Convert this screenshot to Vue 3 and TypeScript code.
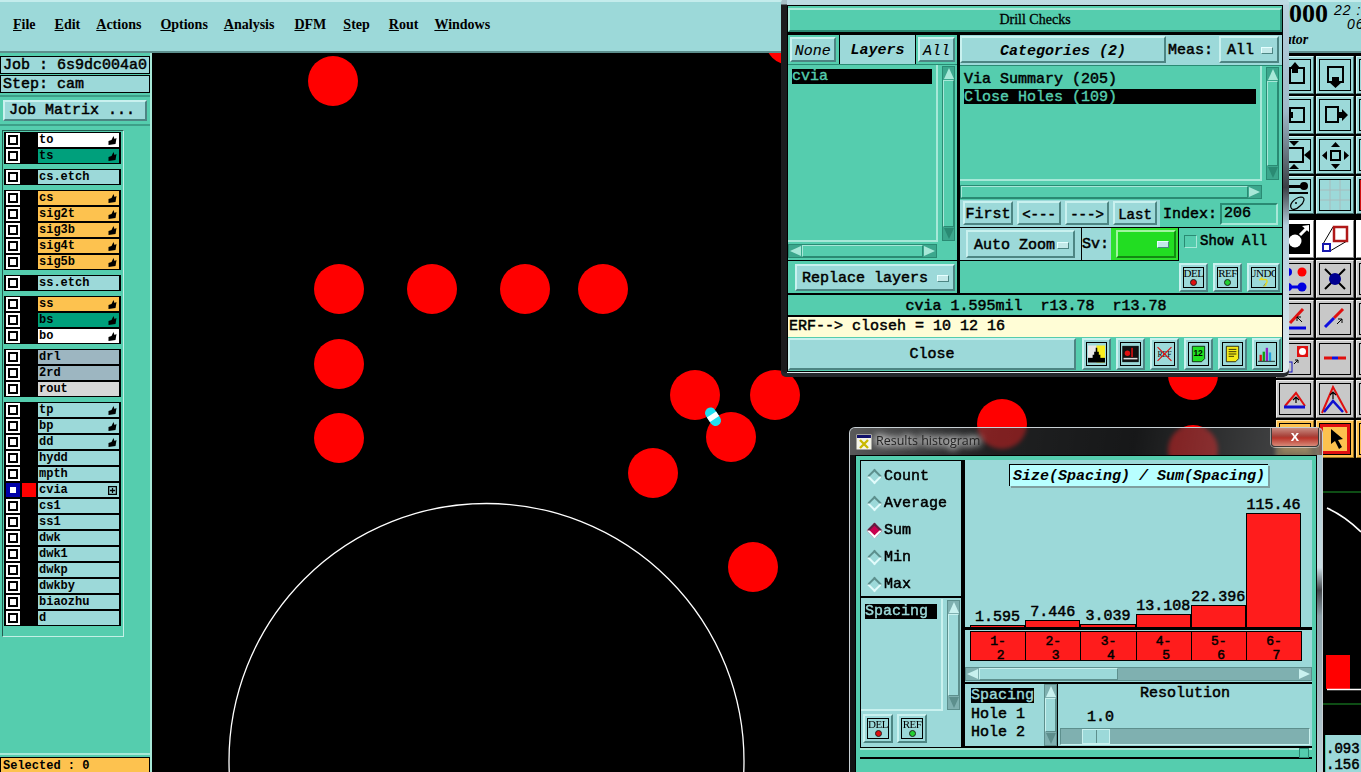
<script setup lang="ts">
type Shape = [string, Record<string, string | number>]

const r = (x: number, y: number, w: number, h: number, fill = 'none', stroke = 'none', sw = 2): Shape =>
  ['rect', { x, y, width: w, height: h, fill, stroke, 'stroke-width': sw }]
const c = (cx: number, cy: number, rad: number, fill: string, stroke = 'none', sw = 1): Shape =>
  ['circle', { cx, cy, r: rad, fill, stroke, 'stroke-width': sw }]
const l = (d: string, stroke = '#000', sw = 2): Shape => ['path', { d, stroke, 'stroke-width': sw, fill: 'none' }]
const f = (d: string, fill = '#000'): Shape => ['path', { d, fill }]

const menus = ['File', 'Edit', 'Actions', 'Options', 'Analysis', 'DFM', 'Step', 'Rout', 'Windows']

interface Layer { name: string; color: string; hand?: boolean; active?: boolean }
const groups: Layer[][] = [
  [{ name: 'to', color: 'white', hand: true }, { name: 'ts', color: 'green', hand: true }],
  [{ name: 'cs.etch', color: 'blue' }],
  [
    { name: 'cs', color: 'orange', hand: true },
    { name: 'sig2t', color: 'orange', hand: true },
    { name: 'sig3b', color: 'orange', hand: true },
    { name: 'sig4t', color: 'orange', hand: true },
    { name: 'sig5b', color: 'orange', hand: true },
  ],
  [{ name: 'ss.etch', color: 'blue' }],
  [
    { name: 'ss', color: 'orange', hand: true },
    { name: 'bs', color: 'green', hand: true },
    { name: 'bo', color: 'white', hand: true },
  ],
  [{ name: 'drl', color: 'steel' }, { name: '2rd', color: 'steel' }, { name: 'rout', color: 'grey' }],
  [
    { name: 'tp', color: 'blue', hand: true },
    { name: 'bp', color: 'blue', hand: true },
    { name: 'dd', color: 'blue', hand: true },
    { name: 'hydd', color: 'blue' },
    { name: 'mpth', color: 'blue' },
    { name: 'cvia', color: 'blue', active: true },
    { name: 'cs1', color: 'blue' },
    { name: 'ss1', color: 'blue' },
    { name: 'dwk', color: 'blue' },
    { name: 'dwk1', color: 'blue' },
    { name: 'dwkp', color: 'blue' },
    { name: 'dwkby', color: 'blue' },
    { name: 'biaozhu', color: 'blue' },
    { name: 'd', color: 'blue' },
  ],
]

// pads on the board, in page coordinates
const pads = [
  [333, 81], [790, 40], [339, 289], [432, 289], [525, 289], [603, 289], [339, 364], [339, 438],
  [695, 395], [775, 395], [731, 437], [653, 473], [753, 567], [1193, 375], [1002, 424], [1193, 450],
]

interface Tool { tone: string; shapes: Shape[] }
const toolsTop: Tool[] = [
  { tone: 'teal', shapes: [r(10, 8, 14, 15, 'none', '#000'), f('M15 2 20 8H18V13H12V8H10Z')] },
  { tone: 'teal', shapes: [r(8, 7, 15, 15, 'none', '#000'), f('M12 17H19V22H22L15.5 28 9 22H12Z')] },
  { tone: 'teal', shapes: [r(6, 8, 16, 14, 'none', '#000')] },
  { tone: 'teal', shapes: [r(10, 8, 14, 14, 'none', '#000'), f('M5 15 9 10V12H13V18H9V20Z')] },
  { tone: 'teal', shapes: [r(6, 7, 12, 15, 'none', '#000'), f('M28 15 22 9V12H17V18H22V21Z')] },
  { tone: 'teal', shapes: [r(8, 8, 14, 14, 'none', '#000')] },
  { tone: 'teal', shapes: [r(6, 8, 17, 14, 'none', '#000'), f('M9 1H19L14 6Z'), f('M9 29H19L14 24Z'), f('M24 15 30 10V20Z')] },
  { tone: 'teal', shapes: [r(11, 11, 9, 9, 'none', '#000'), f('M15.5 2 20 7H11Z'), f('M15.5 29 20 24H11Z'), f('M2 15.5 7 11V20Z'), f('M29 15.5 24 11V20Z')] },
  { tone: 'teal', shapes: [r(6, 8, 18, 14, 'none', '#000')] },
  { tone: 'teal', shapes: [r(0, 5, 24, 3, '#000'), c(24, 6, 4, '#000'), r(0, 12, 28, 2, '#000'), l('M12 29C8 25 14 18 21 17 26 17 24 23 20 26 17 29 14 30 12 29Z', '#000', 1.2), c(16, 23, 1, '#000')] },
  { tone: 'teal', shapes: [l('M10 0V30M20 0V30M0 10H30M0 20H30', '#a8bcbc', 1)] },
  { tone: 'teal', shapes: [r(2, 2, 26, 26, 'none', '#d01010', 4)] },
]
const arrowTip = 'M17 20 22 15M22 15V19M22 15H18'
const toolsBottom: Tool[] = [
  { tone: 'white', shapes: [r(0, 0, 30, 30, '#000'), c(15, 17, 6.5, '#fff'), l('M20 11 27 4', '#fff', 3), f('M29 1V8L22 2Z', '#fff')] },
  { tone: 'white', shapes: [l('M3 20 13 3M10 27 27 17', '#000', 1), r(14, 3, 13, 14, '#fff', '#b01818', 2.5), r(3, 20, 7, 7, '#fff', '#1818b0', 2)] },
  { tone: 'white', shapes: [] },
  { tone: 'grey', shapes: [c(22, 8, 4.5, '#f00'), c(8, 8, 4, '#0000e0'), c(22, 23, 4.5, '#0000e0'), c(8, 23, 4, '#0000e0'), l('M8 23H22', '#0000e0', 3)] },
  { tone: 'grey', shapes: [l('M5 5 25 25M25 5 5 25', '#000', 2), c(15, 15, 6, '#000090')] },
  { tone: 'grey', shapes: [] },
  { tone: 'grey', shapes: [l('M10 19 23 5', '#e01010', 3), l('M7 24H26', '#0000e0', 3), l('M17 13 22 18M17 13V17M17 13H21', '#000', 1)] },
  { tone: 'grey', shapes: [l('M14 14 23 5', '#e01010', 3), l('M5 23 14 14', '#1010e0', 3), l(arrowTip, '#000', 1)] },
  { tone: 'grey', shapes: [] },
  { tone: 'grey', shapes: [r(17, 2, 11, 11, '#e01010'), c(22.5, 7.5, 3.5, '#fff'), r(7, 18, 5, 10, 'none', '#1010c0', 1), l('M14 20 18 16M18 16V19M18 16H15', '#000', 1)] },
  { tone: 'grey', shapes: [l('M4 14H12M18 14H26', '#e01010', 3), l('M12 14H18', '#1010e0', 3)] },
  { tone: 'grey', shapes: [] },
  { tone: 'grey', shapes: [l('M5 22 16 9 25 22', '#e01010', 2), l('M4 23H25', '#1010d0', 3), l('M16 19V13M13 16 16 13 19 16', '#000', 1.2)] },
  { tone: 'grey', shapes: [l('M2 29 13 3 27 29', '#e01010', 2), l('M4 28 13 17 23 28', '#1010d0', 2.5), l('M13 15V8M10 11 13 8 16 11', '#000', 1.2)] },
  { tone: 'grey', shapes: [] },
  { tone: 'orange', shapes: [] },
  { tone: 'orange', shapes: [r(1.5, 1.5, 27, 27, 'none', '#e01010', 3), f('M11 5 11 20 15 17 19 25 22 23 18 16 23 15Z')] },
  { tone: 'orange', shapes: [] },
]

const footIcons: Shape[][] = [
  [r(0, 0, 11, 22, '#e8e8e8'), r(11, 0, 11, 22, '#f8ee20'), r(0, 16, 22, 6, '#000'), f('M6 17V12H8V8H10V3H12V8H14V12H16V17Z'), r(7, 4, 1, 2), r(15, 4, 1, 2)],
  [r(1, 1, 20, 20, '#111', '#000', 1), r(2, 16, 18, 2, '#ddd'), c(7, 10, 3.5, '#e01010'), r(12, 3, 2, 12, '#e01010')],
  [],
  [f('M3 1H19V17L15 21H3Z', '#22e022'), l('M3 1H19V17L15 21H3Z', '#000', 1)],
  [f('M3 1H19V17L15 21H3Z', '#f4ea18'), l('M3 1H19V17L15 21H3Z', '#000', 1), l('M6 5H16M6 8H16M6 11H16M6 14H13', '#000', 1)],
  [r(2, 12, 3, 8, '#e01010'), r(6, 8, 3, 12, '#10a010'), r(10, 3, 3, 17, '#9020c0'), r(14, 9, 3, 11, '#20a0e0'), l('M0 20.5H22', '#000', 1)],
]
const crossOut = l('M2 2 20 20M20 2 2 20', '#e01010', 1.5)

const statusText = 'cvia 1.595mil  r13.78  r13.78'

interface Bar { value: string; range: string[] }
const bars: Bar[] = [
  { value: '1.595', range: ['1-', '2'] },
  { value: '7.446', range: ['2-', '3'] },
  { value: '3.039', range: ['3-', '4'] },
  { value: '13.108', range: ['4-', '5'] },
  { value: '22.396', range: ['5-', '6'] },
  { value: '115.46', range: ['6-', '7'] },
]
const barHeight = (v: string) => Math.max(1, Math.round(parseFloat(v) * 0.99)) + 'px'

const modes = ['Count', 'Average', 'Sum', 'Min', 'Max']
</script>

<template>
  <div class="desk">
    <!-- top bar -->
    <header class="menubar">
      <nav class="menus">
        <span v-for="m in menus" :key="m" class="menu"><u>{{ m[0] }}</u>{{ m.slice(1) }}</span>
      </nav>
      <div class="clock">
        <div class="clock-top">
          <span class="big">2000</span>
          <span class="date">22 :<br /><em>06</em></span>
        </div>
        <span class="oper">Operator</span>
      </div>
    </header>

    <!-- layer column -->
    <aside class="side">
      <div class="side-label">Job : 6s9dc004a0</div>
      <div class="side-label">Step: cam</div>
      <div class="matrix-wrap"><button class="btn matrix">Job Matrix ...</button></div>
      <div class="layers">
        <div v-for="(g, i) in groups" :key="i" class="group">
          <div v-for="lay in g" :key="lay.name" class="layer">
            <span class="chk" :class="{ on: lay.active }"><i></i></span>
            <span class="swatch" :class="{ red: lay.active }"></span>
            <span class="lname" :class="lay.color">
              {{ lay.name }}
              <svg v-if="lay.hand" class="hand" viewBox="0 0 8 9"><path d="M0 9V5L3 4 5 0 6 3 8 2 7 8Z" /></svg>
              <svg v-if="lay.active" class="hand" viewBox="0 0 7 7"><path d="M.5.5H6.5V6.5H.5ZM3.5 1.5V5.5M1.5 3.5H5.5" fill="none" stroke="#000" /></svg>
            </span>
          </div>
        </div>
      </div>
      <div class="side-fill"></div>
      <div class="selected">Selected : 0</div>
    </aside>

    <!-- board -->
    <main class="board">
      <svg class="board-svg" viewBox="152 52 1124 720">
        <circle v-for="(p, i) in pads" :key="i" :cx="p[0]" :cy="p[1]" r="25" fill="#f00" />
        <circle cx="486.5" cy="761" r="257.5" fill="none" stroke="#fff" stroke-width="1.3" />
        <path d="M710.5 413 715.5 420.5" stroke="#21dff0" stroke-width="11" stroke-linecap="round" />
        <path d="M711.5 414.5 714.5 419" stroke="#fff" stroke-width="11" />
      </svg>
    </main>

    <!-- right column -->
    <section class="rightcol">
      <div class="tools">
        <div v-for="(t, i) in toolsTop" :key="i" class="tool" :class="t.tone">
          <svg class="tool-ic" viewBox="0 0 30 30">
            <component :is="s[0]" v-for="(s, j) in t.shapes" :key="j" v-bind="s[1]" />
          </svg>
        </div>
      </div>
      <div class="tools lower">
        <div v-for="(t, i) in toolsBottom" :key="i" class="tool" :class="t.tone">
          <svg class="tool-ic" viewBox="0 0 30 30">
            <component :is="s[0]" v-for="(s, j) in t.shapes" :key="j" v-bind="s[1]" />
          </svg>
        </div>
      </div>
      <svg class="board-right" viewBox="1276 458 85 277">
        <path d="M1276 492H1361M1276 704H1361" stroke="#1d9a2a" />
        <rect x="1326" y="655" width="24" height="34" fill="#f00" />
        <path d="M1327 508C1340 514 1352 523 1361 532M1327 689.5H1361" stroke="#fff" stroke-width="1.6" fill="none" />
      </svg>
      <div class="coords">.093<br />.156</div>
    </section>

    <!-- Drill Checks window -->
    <div class="win drill">
      <div class="drill-in">
        <div class="drill-title">Drill Checks</div>
        <div class="drill-body">
          <div class="d-left">
            <div class="d-head">
              <button class="btn small it">None</button>
              <div class="d-layers">Layers</div>
              <button class="btn small it">All</button>
            </div>
            <div class="d-listrow">
              <div class="list"><div class="sel">cvia</div></div>
              <div class="vbar"><span class="ar up"></span><span class="thumb"></span><span class="ar dn"></span></div>
            </div>
            <div class="hbar left-h"><span class="ar lf"></span><span class="thumb"></span><span class="ar rt"></span></div>
            <div class="d-replace">
              <button class="btn opt replace">Replace layers<span class="dash"></span></button>
            </div>
          </div>
          <div class="d-right">
            <div class="d-cats">
              <button class="btn cats it">Categories (2)</button>
              <span class="meas">Meas:</span>
              <button class="btn opt measbtn">All<span class="dash"></span></button>
            </div>
            <div class="d-listrow catrow">
              <div class="list cats-list">
                <div class="item">Via Summary (205)</div>
                <div class="sel">Close Holes (109)</div>
              </div>
              <div class="vbar"><span class="ar up"></span><span class="thumb"></span><span class="ar dn"></span></div>
            </div>
            <div class="hbar cat-h"><span class="thumb"></span><span class="ar rt"></span></div>
            <div class="d-nav">
              <div class="nav-btns">
                <button class="btn nav">First</button>
                <button class="btn nav arrow">&lt;---</button>
                <button class="btn nav arrow">---&gt;</button>
                <button class="btn nav arrow">Last</button>
              </div>
              <span class="idx-label">Index:</span>
              <span class="idx">206</span>
            </div>
            <div class="d-zoom">
              <div class="zoom-cell"><button class="btn opt zoom">Auto Zoom<span class="dash"></span></button></div>
              <span class="sv">Sv:</span>
              <div class="sv-green"><button class="greenbtn"><span class="dash"></span></button></div>
              <span class="showbox"></span>
              <span class="showall">Show All</span>
            </div>
            <div class="d-acts">
              <div class="mini"><div class="mini-in"><span>DEL</span><b class="dot red"></b></div></div>
              <div class="mini"><div class="mini-in"><span>REF</span><b class="dot green"></b></div></div>
              <div class="mini wide"><div class="mini-in"><span>UNDO</span><svg class="undo" viewBox="0 0 12 12"><path d="M1 4 4 1V3H8C11 3 11 8 8 8 10 9 9 11 6 11" fill="none" stroke="#e8d820" stroke-width="1.6" /><path d="M8 8 6 11" stroke="#000" stroke-width=".4" /></svg></div></div>
            </div>
          </div>
        </div>
        <div class="status">{{ statusText }}</div>
        <div class="erf">ERF--&gt; closeh = 10 12 16</div>
        <div class="foot">
          <button class="btn closebtn">Close</button>
          <div v-for="(ic, i) in footIcons" :key="i" class="foot-ic">
            <div class="foot-frame">
              <svg viewBox="0 0 22 22">
                <component :is="s[0]" v-for="(s, j) in ic" :key="j" v-bind="s[1]" />
                <text v-if="i === 2" x="11" y="15" text-anchor="middle" class="reftxt">REF</text>
                <component :is="crossOut[0]" v-if="i === 2" v-bind="crossOut[1]" />
                <text v-if="i === 3" x="10.5" y="14" text-anchor="middle" class="nmtxt">12</text>
              </svg>
            </div>
          </div>
        </div>
      </div>
    </div>

    <!-- Results histogram window -->
    <div class="win histo">
      <div class="hist-title">
        <svg class="hist-ic" viewBox="0 0 16 16">
          <rect width="16" height="16" fill="#f4f4e8" stroke="#555" />
          <rect x="1" y="1" width="14" height="3" fill="#10106a" />
          <path d="M4 6 12 14M12 6 4 14" stroke="#c8b800" stroke-width="2.4" />
        </svg>
        <span class="hist-name">Results histogram</span>
        <span class="x-btn">x</span>
      </div>
      <div class="hist-in">
        <div class="hist-main">
          <div class="h-left">
            <div class="modes">
              <div v-for="m in modes" :key="m" class="mode">
                <span class="diamond" :class="{ on: m === 'Sum' }"></span>{{ m }}
              </div>
            </div>
            <div class="h-listrow">
              <div class="list light"><div class="sel short">Spacing</div></div>
              <div class="vbar light"><span class="ar up"></span><span class="thumb"></span><span class="ar dn"></span></div>
            </div>
            <div class="h-acts">
              <div class="mini light"><div class="mini-in"><span>DEL</span><b class="dot red"></b></div></div>
              <div class="mini light"><div class="mini-in"><span>REF</span><b class="dot green"></b></div></div>
            </div>
          </div>
          <div class="h-right">
            <div class="chart">
              <div class="chart-title">Size(Spacing) / Sum(Spacing)</div>
              <div class="bars">
                <div v-for="b in bars" :key="b.range[0]" class="barcol">
                  <span class="barval">{{ b.value }}</span>
                  <div class="bar" :style="{ height: barHeight(b.value) }"></div>
                </div>
              </div>
            </div>
            <div class="cells">
              <div v-for="b in bars" :key="b.range[0]" class="cell">
                <span>{{ b.range[0] }}</span><span class="cell2">{{ b.range[1] }}</span>
              </div>
            </div>
            <div class="hbar light hist-h"><span class="ar lf"></span><span class="thumb"></span><span class="ar rt"></span></div>
            <div class="h-bottom">
              <div class="attr">
                <div class="sel fit">Spacing</div>
                <div class="item">Hole 1</div>
                <div class="item">Hole 2</div>
              </div>
              <div class="vbar light attr-bar"><span class="ar up"></span><span class="thumb"></span><span class="ar dn"></span></div>
              <div class="reso">
                <div class="reso-t">Resolution</div>
                <div class="reso-v">1.0</div>
                <div class="slider"><span class="knob"></span></div>
              </div>
            </div>
          </div>
        </div>
        <div class="sash"><span class="sash-k"></span></div>
        <div class="hist-lower"></div>
      </div>
    </div>
  </div>
</template>

<style scoped>
.desk {
  position: relative;
  width: 1361px;
  height: 772px;
  overflow: hidden;
  background: #000;
  display: grid;
  grid-template-columns: 152px 1124px 85px;
  grid-template-rows: 53px 719px;
  font: 15px "Liberation Mono", monospace;
  -webkit-text-stroke: .5px #000;
  color: #000;
}
button {
  font: inherit;
  color: inherit;
  padding: 2px 0 0;
  box-sizing: border-box;
}

.btn {
  background: #9cd9d9;
  border: 2px solid;
  border-color: #c9f1ef #4d8583 #4d8583 #c9f1ef;
}
.it { font-style: italic; font-weight: bold; -webkit-text-stroke: 0; }

.menubar {
  grid-column: 1 / 4;
  display: flex;
  justify-content: space-between;
  background: #9cd9d9;
  border-top: 2px solid #c4ecec;
  border-bottom: 2px solid #5d8f8d;
  box-sizing: border-box;
  overflow: hidden;
  -webkit-text-stroke: 0;
}
.menus {
  display: flex;
  padding: 15px 0 0 13px;
  font: bold 14px "Liberation Serif", serif;
}
.menu { margin-right: 17px; }
.menu:nth-child(1) { margin-right: 19px; }
.menu:nth-child(2) { margin-right: 16px; }
.menu:nth-child(3) { margin-right: 19px; }
.menu:nth-child(4) { margin-right: 16px; }
.menu:nth-child(5) { margin-right: 20px; }
.menu:nth-child(7) { margin-right: 19px; }
.menu:nth-child(8) { margin-right: 16px; }
.clock {
  width: 72px;
  flex: none;
  font-family: "Liberation Serif", serif;
  white-space: nowrap;
  overflow: hidden;
}
.clock-top { display: flex; margin-left: -13px; height: 30px; }
.big { font-size: 26px; font-weight: bold; line-height: 24px; }
.date {
  font: italic 14px/14px "Liberation Sans", sans-serif;
  margin: 1px 0 0 6px;
  letter-spacing: 1px;
}
.date em { margin-left: 13px; }
.oper {
  font: italic bold 14px "Liberation Serif", serif;
  display: block;
  margin: 0 0 0 -33px;
}

.side {
  background: #55cdae;
  width: 152px;
  box-sizing: border-box;
  border-right: 2px solid #a7e8d8;
  display: flex;
  flex-direction: column;
  padding-top: 3px;
}
.side-label {
  height: 18px;
  margin-bottom: 1px;
  width: 150px;
  box-sizing: border-box;
  border: 1px solid #000;
  background: #9cd9d9;
  padding: 1px 0 0 2px;
  line-height: 16px;
  white-space: pre;
}
.matrix-wrap {
  border-top: 2px solid #3d9f88;
  border-bottom: 2px solid #3d9f88;
  padding: 3px;
  margin-top: 1px;
}
.matrix {
  display: block;
  width: 144px;
  height: 21px;
  text-align: left;
  padding: 1px 0 0 4px;
  line-height: 16px;
}
.layers {
  margin: 4px 0 0 2px;
  width: 122px;
  box-sizing: border-box;
  border: 1px solid;
  border-color: #235c4f #c4f0e6 #c4f0e6 #235c4f;
  padding: 1px 1px 10px 1px;
  display: flex;
  flex-direction: column;
  gap: 5px;
}
.group {
  background: #000;
  width: 117px;
  padding: 1px 2px;
  box-sizing: border-box;
  display: flex;
  flex-direction: column;
  gap: 2px;
}
.layer {
  display: flex;
  height: 14px;
  align-items: stretch;
  font-size: 12px;
  font-weight: bold;
  line-height: 14px;
  -webkit-text-stroke: 0;
}
.chk {
  width: 14px;
  height: 14px;
  box-sizing: border-box;
  border: 2px solid #fff;
  background: #fff;
  flex: none;
}
.chk i {
  display: block;
  height: 100%;
  box-sizing: border-box;
  border: 2px solid #000;
  background: #fff;
}
.chk.on { border-color: #0000a8; }
.chk.on i { border-color: #0000a8; }
.swatch {
  width: 14px;
  margin: 0 2px;
  background: #000;
  flex: none;
}
.swatch.red { background: #f00; }
.lname {
  flex: 1;
  padding-left: 1px;
  position: relative;
  color: #000;
  white-space: nowrap;
}
.white { background: #fff; }
.green { background: #00a07c; }
.blue { background: #9cd9d9; }
.orange { background: #fdc24f; }
.steel { background: #9db6c1; }
.grey { background: #d8d8d8; }
.hand {
  position: absolute;
  right: 2px;
  top: 3px;
  width: 9px;
  height: 9px;
}
.side-fill {
  flex: 1;
  border-bottom: 2px solid #a7e8d8;
}
.selected {
  width: 150px;
  height: 15px;
  background: #fdc24f;
  border: 1px solid #000;
  border-bottom: 0;
  box-sizing: border-box;
  margin-top: 2px;
  font-size: 12px;
  font-weight: bold;
  line-height: 17px;
  padding-left: 2px;
  white-space: pre;
  overflow: hidden;
  -webkit-text-stroke: 0;
}

.board { background: #000; overflow: hidden; }
.board-svg { display: block; width: 1124px; height: 720px; margin-top: -1px; }

.rightcol {
  display: flex;
  flex-direction: column;
  background: #000;
  min-height: 0;
}
.tools {
  display: grid;
  grid-template-columns: repeat(3, 38px);
  grid-auto-rows: 38px;
  gap: 2px;
  padding-top: 3px;
}
.lower { padding-top: 6px; }
.tool {
  box-sizing: border-box;
  padding: 3px;
  border: 1px solid;
  border-color: #d2f3f1 #456f6d #456f6d #d2f3f1;
  background: #9cd9d9;
  width: 38px;
}
.tool.white { background: #fff; border-color: #fff #8a8a8a #8a8a8a #fff; }
.tool.grey { background: #c8c8c8; border-color: #eee #666 #666 #eee; }
.tool.orange { background: #fdc24f; border-color: #ffe6ad #9b7420 #9b7420 #ffe6ad; }
.tool-ic {
  display: block;
  width: 30px;
  height: 30px;
  box-sizing: border-box;
  outline: 1px solid #000;
}
.tool.white .tool-ic { outline: 0; }
.board-right { display: block; width: 85px; flex: 1; min-height: 0; }
.coords {
  margin-left: 49px;
  height: 37px;
  background: #9cd9d9;
  border-left: 1px solid #55cdae;
  font-size: 14px;
  line-height: 16px;
  padding-top: 6px;
  box-sizing: border-box;
  white-space: nowrap;
  overflow: hidden;
}

.win {
  position: absolute;
  box-sizing: border-box;
  border-radius: 5px;
}
.drill {
  left: 781px;
  top: -2px;
  width: 508px;
  height: 379px;
  padding: 7px 6px 5px 6px;
  background:
    linear-gradient(to bottom, rgba(190, 220, 228, .85) 0 6px, transparent 7px),
    linear-gradient(to right, #1c1c1e 0 6px, transparent 6px),
    linear-gradient(to bottom, #b9d4e0, #9eb9c8 30%, #3a3f45 50%, #b4cfdd 60%, #dfe9ee);
  box-shadow: inset 0 -4px 0 #24282c;
}
.drill-in {
  height: 367px;
  box-sizing: border-box;
  background: #55cdae;
  border: 1px solid #000;
  display: flex;
  flex-direction: column;
}
.drill-title {
  margin-top: 2px;
  height: 24px;
  border: 2px solid;
  border-color: #a7e8d8 #2a8a73 #2a8a73 #a7e8d8;
  box-sizing: border-box;
  text-align: center;
  font: 14px/20px "Liberation Serif", serif;
  -webkit-text-stroke: .3px #000;
  flex: none;
}
.drill-body {
  display: flex;
  border-top: 3px solid #000;
  border-bottom: 2px solid #000;
  box-sizing: content-box;
  height: 258px;
  flex: none;
}
.d-left {
  width: 169px;
  border-right: 3px solid #000;
  box-sizing: content-box;
  display: flex;
  flex-direction: column;
}
.d-head {
  height: 29px;
  display: flex;
  background: #55cdae;
  align-items: stretch;
}
.small { margin: 2px 3px 2px 2px; font-weight: normal; -webkit-text-stroke: .1px #000; padding-top: 3px; }
.d-head .small:first-child { width: 46px; }
.d-head .small:last-child { width: 37px; margin-left: 2px; margin-right: 2px; }
.d-layers {
  width: 76px;
  background: #9cd9d9;
  font-style: italic;
  font-weight: bold;
  -webkit-text-stroke: 0;
  text-align: center;
  line-height: 31px;
  border-left: 1px solid #000;
  border-right: 1px solid #000;
}
.d-listrow {
  display: flex;
  height: 178px;
  border-top: 1px solid #2a8a73;
  box-sizing: border-box;
}
.list {
  flex: 1;
  border-right: 2px solid #a7e8d8;
  border-bottom: 2px solid #a7e8d8;
  padding: 4px 4px;
  box-sizing: border-box;
}
.list.light { border-color: #c9f1ef; background: #9cd9d9; }
.sel {
  background: #000;
  color: #55cdae;
  height: 15px;
  line-height: 16px;
  white-space: nowrap;
  -webkit-text-stroke: .4px #55cdae;
}
.sel.short { color: #9cd9d9; width: 72px; -webkit-text-stroke-color: #9cd9d9; }
.sel.fit { color: #9cd9d9; width: 63px; margin-bottom: 3px; -webkit-text-stroke-color: #9cd9d9; }
.item { height: 18px; line-height: 18px; white-space: nowrap; }
.vbar {
  width: 13px;
  margin: 1px 2px 1px 4px;
  background: #3ca78d;
  border: 1px solid #2a8a73;
  display: flex;
  flex-direction: column;
  align-items: stretch;
  box-sizing: border-box;
  flex: none;
}
.thumb {
  flex: 1;
  background: #55cdae;
  border: 1px solid;
  border-color: #a7e8d8 #2a8a73 #2a8a73 #a7e8d8;
}
.ar {
  display: block;
  width: 0;
  height: 0;
  flex: none;
  margin: 1px;
  border: 5px solid transparent;
}
.vbar .ar { height: 0; border-width: 0 5px 11px; }
.vbar .dn { border-width: 11px 5px 0; border-top-color: #2a8a73; }
.vbar .up { border-bottom-color: #a7e8d8; }
.hbar {
  height: 14px;
  background: #3ca78d;
  border: 1px solid #2a8a73;
  display: flex;
  box-sizing: border-box;
  align-items: center;
}
.hbar .thumb { align-self: stretch; }
.hbar .ar { border-width: 5px 11px 5px 0; }
.hbar .lf { border-right-color: #a7e8d8; }
.hbar .rt { border-width: 5px 0 5px 11px; border-left-color: #a7e8d8; }
.left-h { width: 149px; margin-top: 2px; flex: none; }
.d-replace {
  margin-top: 2px;
  flex: 1;
  border-top: 1px solid #000;
  padding: 3px 0 0 7px;
}
.opt {
  display: flex;
  align-items: center;
  justify-content: space-between;
  white-space: nowrap;
}
.dash {
  width: 10px;
  height: 5px;
  background: #c3e9e9;
  border: 1px solid;
  border-color: #e6ffff #4d8583 #4d8583 #e6ffff;
  flex: none;
}
.replace { width: 160px; height: 27px; padding: 2px 4px 0 5px; }
.d-right { flex: 1; display: flex; flex-direction: column; min-width: 0; }
.d-cats { height: 30px; display: flex; background: #9cd9d9; padding-top: 1px; box-sizing: border-box; flex: none; }
.cats { width: 206px; height: 27px; padding-top: 3px; }
.meas { width: 53px; padding-left: 2px; line-height: 30px; box-sizing: border-box; }
.measbtn { width: 60px; height: 27px; padding: 2px 4px 0 6px; }
.catrow { height: 116px; border-top: 1px solid #2a8a73; flex: none; }
.cats-list { padding: 5px 4px; }
.cats-list .sel { line-height: 17px; }
.catrow .vbar { margin-right: 3px; }
.cat-h { width: 302px; margin-top: 4px; flex: none; }
.d-nav {
  display: flex;
  align-items: center;
  height: 28px;
  margin-top: 1px;
  flex: none;
  border-bottom: 1px solid #000;
  box-sizing: border-box;
}
.nav-btns {
  display: flex;
  gap: 4px;
  padding: 1px 3px;
  background: #9cd9d9;
  align-self: stretch;
}
.nav { height: 24px; width: 50px; padding-top: 3px; }
.arrow { width: 44px; font-size: 14px; }
.idx-label { margin: 2px 0 0 3px; width: 57px; }
.idx {
  width: 58px;
  height: 22px;
  line-height: 17px;
  padding-left: 2px;
  box-sizing: border-box;
  border: 2px solid;
  border-color: #2a8a73 #a7e8d8 #a7e8d8 #2a8a73;
}
.d-zoom {
  display: flex;
  align-items: center;
  height: 33px;
  flex: none;
}
.zoom-cell {
  width: 122px;
  align-self: stretch;
  background: #9cd9d9;
  border-right: 1px solid #000;
  padding: 2px 0 0 6px;
  box-sizing: border-box;
  border-bottom: 1px solid #000;
}
.zoom { width: 109px; height: 28px; padding: 2px 4px 0 6px; }
.sv {
  width: 29px;
  align-self: stretch;
  background: #9cd9d9;
  line-height: 33px;
  border-bottom: 1px solid #000;
}
.sv-green {
  width: 68px;
  align-self: stretch;
  background: #2fe02f;
  box-sizing: border-box;
  padding: 2px 2px 2px 5px;
  border-bottom: 1px solid #000;
  border-right: 1px solid #000;
}
.greenbtn {
  display: flex;
  align-items: center;
  justify-content: flex-end;
  width: 100%;
  height: 100%;
  background: #22dd22;
  border: 2px solid;
  border-color: #a0f5a0 #128a12 #128a12 #a0f5a0;
  padding: 0 5px 0 0;
}
.showbox {
  width: 13px;
  height: 13px;
  margin: -6px 3px 0 5px;
  box-sizing: border-box;
  border: 1px solid;
  border-color: #2a8a73 #a7e8d8 #a7e8d8 #2a8a73;
}
.showall { font-size: 14px; white-space: nowrap; margin-top: -8px; }
.d-acts {
  display: flex;
  justify-content: flex-end;
  gap: 5px;
  padding: 2px 2px 0 0;
}
.mini {
  width: 29px;
  height: 29px;
  box-sizing: border-box;
  padding: 2px;
  background: #9cd9d9;
  border: 2px solid;
  border-color: #c9f1ef #4d8583 #4d8583 #c9f1ef;
}
.mini.wide { width: 33px; }
.mini-in {
  height: 100%;
  border: 1px solid #000;
  box-sizing: border-box;
  display: flex;
  flex-direction: column;
  align-items: center;
  overflow: hidden;
  font: 11px/11px "Liberation Serif", serif;
  -webkit-text-stroke: 0;
}
.mini-in span { letter-spacing: -.5px; }
.dot {
  width: 7px;
  height: 7px;
  border-radius: 50%;
  border: 1px solid #222;
  box-sizing: border-box;
}
.dot.red { background: #e01010; }
.dot.green { background: #22d030; }
.undo { width: 11px; height: 11px; margin-top: -2px; }
.status {
  line-height: 21px;
  text-align: center;
  white-space: pre;
  padding: 1px 0 0 2px;
  border-bottom: 2px solid #000;
  flex: none;
  box-sizing: border-box;
  height: 22px;
}
.erf {
  height: 20px;
  line-height: 20px;
  background: #fffdd6;
  padding-left: 1px;
  flex: none;
}
.foot {
  display: flex;
  flex: 1;
  padding-top: 1px;
  align-items: stretch;
  gap: 5px;
  background: #55cdae;
  min-height: 0;
}
.closebtn { width: 288px; margin-right: 1px; margin-bottom: 1px; padding-top: 0; }
.foot-ic {
  width: 29px;
  box-sizing: border-box;
  background: #9cd9d9;
  border: 2px solid;
  border-color: #c9f1ef #4d8583 #4d8583 #c9f1ef;
  padding: 2px;
  margin-bottom: 1px;
}
.foot-frame {
  height: 100%;
  border: 1px solid #000;
  box-sizing: border-box;
  padding: 1px;
}
.foot-frame svg { display: block; width: 100%; height: 100%; }
.reftxt { font: 10px "Liberation Serif", serif; -webkit-text-stroke: 0; }
.nmtxt { font: bold 11px "Liberation Sans", sans-serif; -webkit-text-stroke: 0; }

.histo {
  left: 849px;
  top: 427px;
  width: 474px;
  height: 350px;
  display: flex;
  flex-direction: column;
  overflow: hidden;
  background: rgba(30, 32, 34, .6);
  backdrop-filter: blur(2px);
  border: 1px solid #c8d0d4;
  border-bottom: 0;
  border-radius: 6px 6px 0 0;
  padding: 0 5px;
}
.histo::after {
  content: "";
  position: absolute;
  right: 0;
  top: 27px;
  bottom: 0;
  width: 5px;
  background: linear-gradient(to bottom, #a9c9d2, #c9dee4 35%, #44484c 42%, #8aa0a8 50%, #c0d6dc);
}
.hist-title {
  height: 27px;
  flex: none;
  display: flex;
  align-items: flex-start;
  margin: 0 -5px;
  padding-left: 6px;
  -webkit-text-stroke: 0;
  background: linear-gradient(100deg, rgba(255, 255, 255, .3), rgba(255, 255, 255, .06) 30%, rgba(255, 255, 255, .02) 60%, rgba(255, 255, 255, .25));
}
.hist-ic { width: 16px; height: 16px; margin-top: 6px; flex: none; }
.hist-name {
  font: 12.5px/16px "Open Sans", sans-serif;
  color: #222;
  margin: 5px 0 0 4px;
  text-shadow: 0 0 6px #fff, 0 0 8px #fff, 0 0 10px #fff;
  white-space: nowrap;
}
.x-btn {
  margin-left: auto;
  margin-right: 3px;
  width: 46px;
  height: 18px;
  text-align: center;
  color: #fff;
  font: bold 15px/15px "Liberation Sans", sans-serif;
  background: linear-gradient(to bottom, #c98c82, #a8423a 45%, #b8342a 55%, #d88a78);
  border: 1px solid #3a3a3a;
  border-top: 0;
  border-radius: 0 0 4px 4px;
  box-shadow: 0 0 0 1px rgba(255, 255, 255, .5);
  flex: none;
}
.hist-in {
  flex: 1;
  background: #55cdae;
  border: 1px solid #000;
  box-sizing: border-box;
  display: flex;
  flex-direction: column;
  padding: 4px 4px 0 4px;
  min-height: 0;
}
.hist-main {
  display: flex;
  height: 288px;
  flex: none;
  gap: 2px;
  background: #000;
}
.h-left {
  width: 102px;
  background: #9cd9d9;
  border: 1px solid #000;
  box-sizing: border-box;
  display: flex;
  flex-direction: column;
  flex: none;
}
.modes {
  height: 137px;
  flex: none;
  padding: 2px 0 0 4px;
  border-bottom: 2px solid #000;
  box-sizing: border-box;
}
.mode {
  display: flex;
  align-items: center;
  height: 27px;
  line-height: 27px;
  white-space: nowrap;
}
.diamond {
  width: 11px;
  height: 11px;
  margin: 0 4px;
  box-sizing: border-box;
  transform: rotate(45deg);
  border: 2px solid;
  border-color: #5d8f8d #e2fbfb #e2fbfb #5d8f8d;
  flex: none;
}
.diamond.on { background: #c8004f; border-color: #5d2040 #fff #fff #5d2040; }
.h-listrow { display: flex; height: 113px; flex: none; padding-top: 1px; box-sizing: border-box; }
.h-listrow .list { padding: 5px 4px; }
.vbar.light, .hbar.light { background: #7fb0b0; border-color: #5d8f8d; }
.vbar.light .thumb, .hbar.light .thumb { background: #9cd9d9; border-color: #c9f1ef #5d8f8d #5d8f8d #c9f1ef; }
.vbar.light .up { border-bottom-color: #c9f1ef; }
.vbar.light .dn { border-top-color: #5d8f8d; }
.hbar.light .lf { border-right-color: #c9f1ef; }
.hbar.light .rt { border-left-color: #c9f1ef; }
.h-acts { display: flex; gap: 4px; padding: 3px 0 0 2px; }
.mini.light { width: 30px; }
.h-right {
  flex: 1;
  display: flex;
  flex-direction: column;
  background: #9cd9d9;
  min-width: 0;
  border-left: 1px solid #000;
}
.chart {
  height: 167px;
  flex: none;
  position: relative;
  border-bottom: 3px solid #000;
  box-sizing: content-box;
  display: flex;
  flex-direction: column;
}
.chart-title {
  margin: 4px 0 0 44px;
  width: 259px;
  height: 22px;
  line-height: 23px;
  text-align: center;
  font-style: italic;
  font-weight: bold;
  -webkit-text-stroke: 0;
  background: #b8ffff;
  border: 1px solid #000;
  border-width: 1px 0 0 1px;
  box-sizing: border-box;
  box-shadow: 2px 2px 0 #7f9f9f;
  white-space: nowrap;
  flex: none;
}
.bars {
  flex: 1;
  display: flex;
  align-items: flex-end;
  padding-left: 5px;
}
.barcol {
  width: 55.2px;
  display: flex;
  flex-direction: column;
  align-items: center;
}
.barval {
  height: 17px;
  line-height: 19px;
  white-space: nowrap;
  width: 55px;
  text-align: center;
}
.bar {
  width: 100%;
  background: #ff1c1c;
  border: 1px solid #000;
  border-bottom: 0;
  box-sizing: border-box;
}
.cells {
  display: flex;
  margin: 1px 0 0 5px;
  width: 332px;
  height: 30px;
  flex: none;
  background: #ff1c1c;
  border: 1px solid #000;
  box-sizing: border-box;
}
.cell {
  flex: 1;
  border-left: 1px solid #000;
  display: flex;
  flex-direction: column;
  align-items: center;
  font-size: 13px;
  line-height: 14px;
  padding-top: 3px;
}
.cell:first-child { border-left: 0; }
.cell2 { margin-left: 5px; }
.hist-h { height: 14px; margin-top: 6px; flex: none; }
.hist-h .thumb { flex: 0 0 137px; }
.hist-h .rt { margin-left: auto; }
.h-bottom {
  flex: 1;
  display: flex;
  border: 2px solid #000;
  border-left: 0;
  border-right: 0;
  margin-top: 1px;
  min-height: 0;
}
.attr { width: 79px; padding: 4px 0 0 6px; box-sizing: border-box; flex: none; }
.attr-bar { margin: 0; flex: none; }
.reso {
  flex: 1;
  border: 2px solid #000;
  border-width: 0 0 0 1px;
  display: flex;
  flex-direction: column;
  padding: 0 2px;
  min-width: 0;
}
.reso-t { text-align: center; line-height: 18px; margin-top: 1px; }
.reso-v { margin: 7px 0 0 27px; line-height: 16px; }
.slider {
  height: 15px;
  margin-top: 2px;
  background: #7fb0b0;
  border: 1px solid #5d8f8d;
  border-right-color: #c9f1ef;
  border-bottom-color: #c9f1ef;
  padding-left: 21px;
}
.knob {
  display: block;
  width: 28px;
  height: 100%;
  background: linear-gradient(to right, #9cd9d9 0 13px, #5d8f8d 13px 14px, #9cd9d9 14px);
  border: 1px solid #c9f1ef;
  box-sizing: border-box;
}
.sash {
  height: 9px;
  flex: none;
  position: relative;
  background: linear-gradient(#a7e8d8 0 2px, #55cdae 2px);
  border-bottom: 2px solid #000;
  box-sizing: content-box;
}
.sash-k {
  position: absolute;
  right: 3px;
  top: 0;
  width: 8px;
  height: 8px;
  background: #55cdae;
  border: 1px solid #2a8a73;
}
.hist-lower { flex: 1; background: #55cdae; }
</style>

<style>
html, body { margin: 0; background: #000; overflow: hidden; }
</style>
